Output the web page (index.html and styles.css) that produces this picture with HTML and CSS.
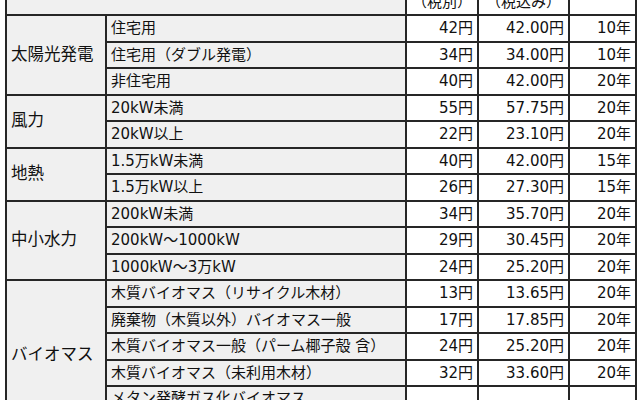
FILE: index.html
```html
<!DOCTYPE html>
<html lang="ja">
<head>
<meta charset="utf-8">
<title>固定価格買取制度 調達価格</title>
<link rel="stylesheet" href="styles.css">
</head>
<body>
<table class="tariff">
  <colgroup>
    <col class="c-src">
    <col class="c-cat">
    <col class="c-ex">
    <col class="c-in">
    <col class="c-term">
  </colgroup>
  <thead>
    <tr class="head">
      <th colspan="2" class="gray">電源・区分</th>
      <th>調達価格<br>（税別）</th>
      <th>調達価格<br>（税込み）</th>
      <th>期間</th>
    </tr>
  </thead>
  <tbody>
    <tr>
      <td rowspan="3" class="src">太陽光発電</td>
      <td class="cat">住宅用</td>
      <td class="num">42円</td><td class="num">42.00円</td><td class="num">10年</td>
    </tr>
    <tr>
      <td class="cat">住宅用（ダブル発電）</td>
      <td class="num">34円</td><td class="num">34.00円</td><td class="num">10年</td>
    </tr>
    <tr>
      <td class="cat">非住宅用</td>
      <td class="num">40円</td><td class="num">42.00円</td><td class="num">20年</td>
    </tr>
    <tr>
      <td rowspan="2" class="src">風力</td>
      <td class="cat">20kW未満</td>
      <td class="num">55円</td><td class="num">57.75円</td><td class="num">20年</td>
    </tr>
    <tr>
      <td class="cat">20kW以上</td>
      <td class="num">22円</td><td class="num">23.10円</td><td class="num">20年</td>
    </tr>
    <tr>
      <td rowspan="2" class="src">地熱</td>
      <td class="cat">1.5万kW未満</td>
      <td class="num">40円</td><td class="num">42.00円</td><td class="num">15年</td>
    </tr>
    <tr>
      <td class="cat">1.5万kW以上</td>
      <td class="num">26円</td><td class="num">27.30円</td><td class="num">15年</td>
    </tr>
    <tr>
      <td rowspan="3" class="src">中小水力</td>
      <td class="cat">200kW未満</td>
      <td class="num">34円</td><td class="num">35.70円</td><td class="num">20年</td>
    </tr>
    <tr>
      <td class="cat">200kW～1000kW</td>
      <td class="num">29円</td><td class="num">30.45円</td><td class="num">20年</td>
    </tr>
    <tr>
      <td class="cat">1000kW～3万kW</td>
      <td class="num">24円</td><td class="num">25.20円</td><td class="num">20年</td>
    </tr>
    <tr>
      <td rowspan="5" class="src">バイオマス</td>
      <td class="cat">木質バイオマス（リサイクル木材）</td>
      <td class="num">13円</td><td class="num">13.65円</td><td class="num">20年</td>
    </tr>
    <tr>
      <td class="cat">廃棄物（木質以外）バイオマス一般</td>
      <td class="num">17円</td><td class="num">17.85円</td><td class="num">20年</td>
    </tr>
    <tr>
      <td class="cat">木質バイオマス一般（パーム椰子殻 含）</td>
      <td class="num">24円</td><td class="num">25.20円</td><td class="num">20年</td>
    </tr>
    <tr>
      <td class="cat">木質バイオマス（未利用木材）</td>
      <td class="num">32円</td><td class="num">33.60円</td><td class="num">20年</td>
    </tr>
    <tr class="tall">
      <td class="cat">メタン発酵ガス化バイオマス<br>（下水汚泥・家畜糞尿）</td>
      <td class="num">39円</td><td class="num">40.95円</td><td class="num">20年</td>
    </tr>
  </tbody>
</table>
</body>
</html>
```
FILE: styles.css
```css
html, body {
  margin: 0;
  padding: 0;
  background: #ffffff;
}

body {
  font-family: "DejaVu Sans", "Noto Sans CJK JP", sans-serif;
  color: #111111;
  overflow: hidden;
}

.tariff {
  border-collapse: collapse;
  table-layout: fixed;
  width: 630px;
  margin: -32px 0 0 5px;
  font-size: 15px;
  line-height: 20px;
}

.c-src { width: 100px; }
.c-cat { width: 300px; }
.c-ex { width: 72px; }
.c-in { width: 91px; }
.c-term { width: 67px; }

.tariff th,
.tariff td {
  border: 2px solid #262626;
  padding: 0 4px;
  vertical-align: middle;
  white-space: nowrap;
  overflow: hidden;
}

.tariff tr {
  height: 26.5px;
}

.tariff .head {
  height: 46px;
}

.tariff th {
  font-weight: normal;
  text-align: center;
  background: #ffffff;
}

.tariff th.gray {
  background: #f0f0f0;
}

.src {
  background: #f0f0f0;
  font-size: 16.5px;
  text-align: left;
}

.cat {
  background: #f0f0f0;
  text-align: left;
}

.num {
  background: #ffffff;
  text-align: right;
  padding-right: 5px;
}

.tall .cat {
  vertical-align: top;
  padding-top: 1px;
}
```
